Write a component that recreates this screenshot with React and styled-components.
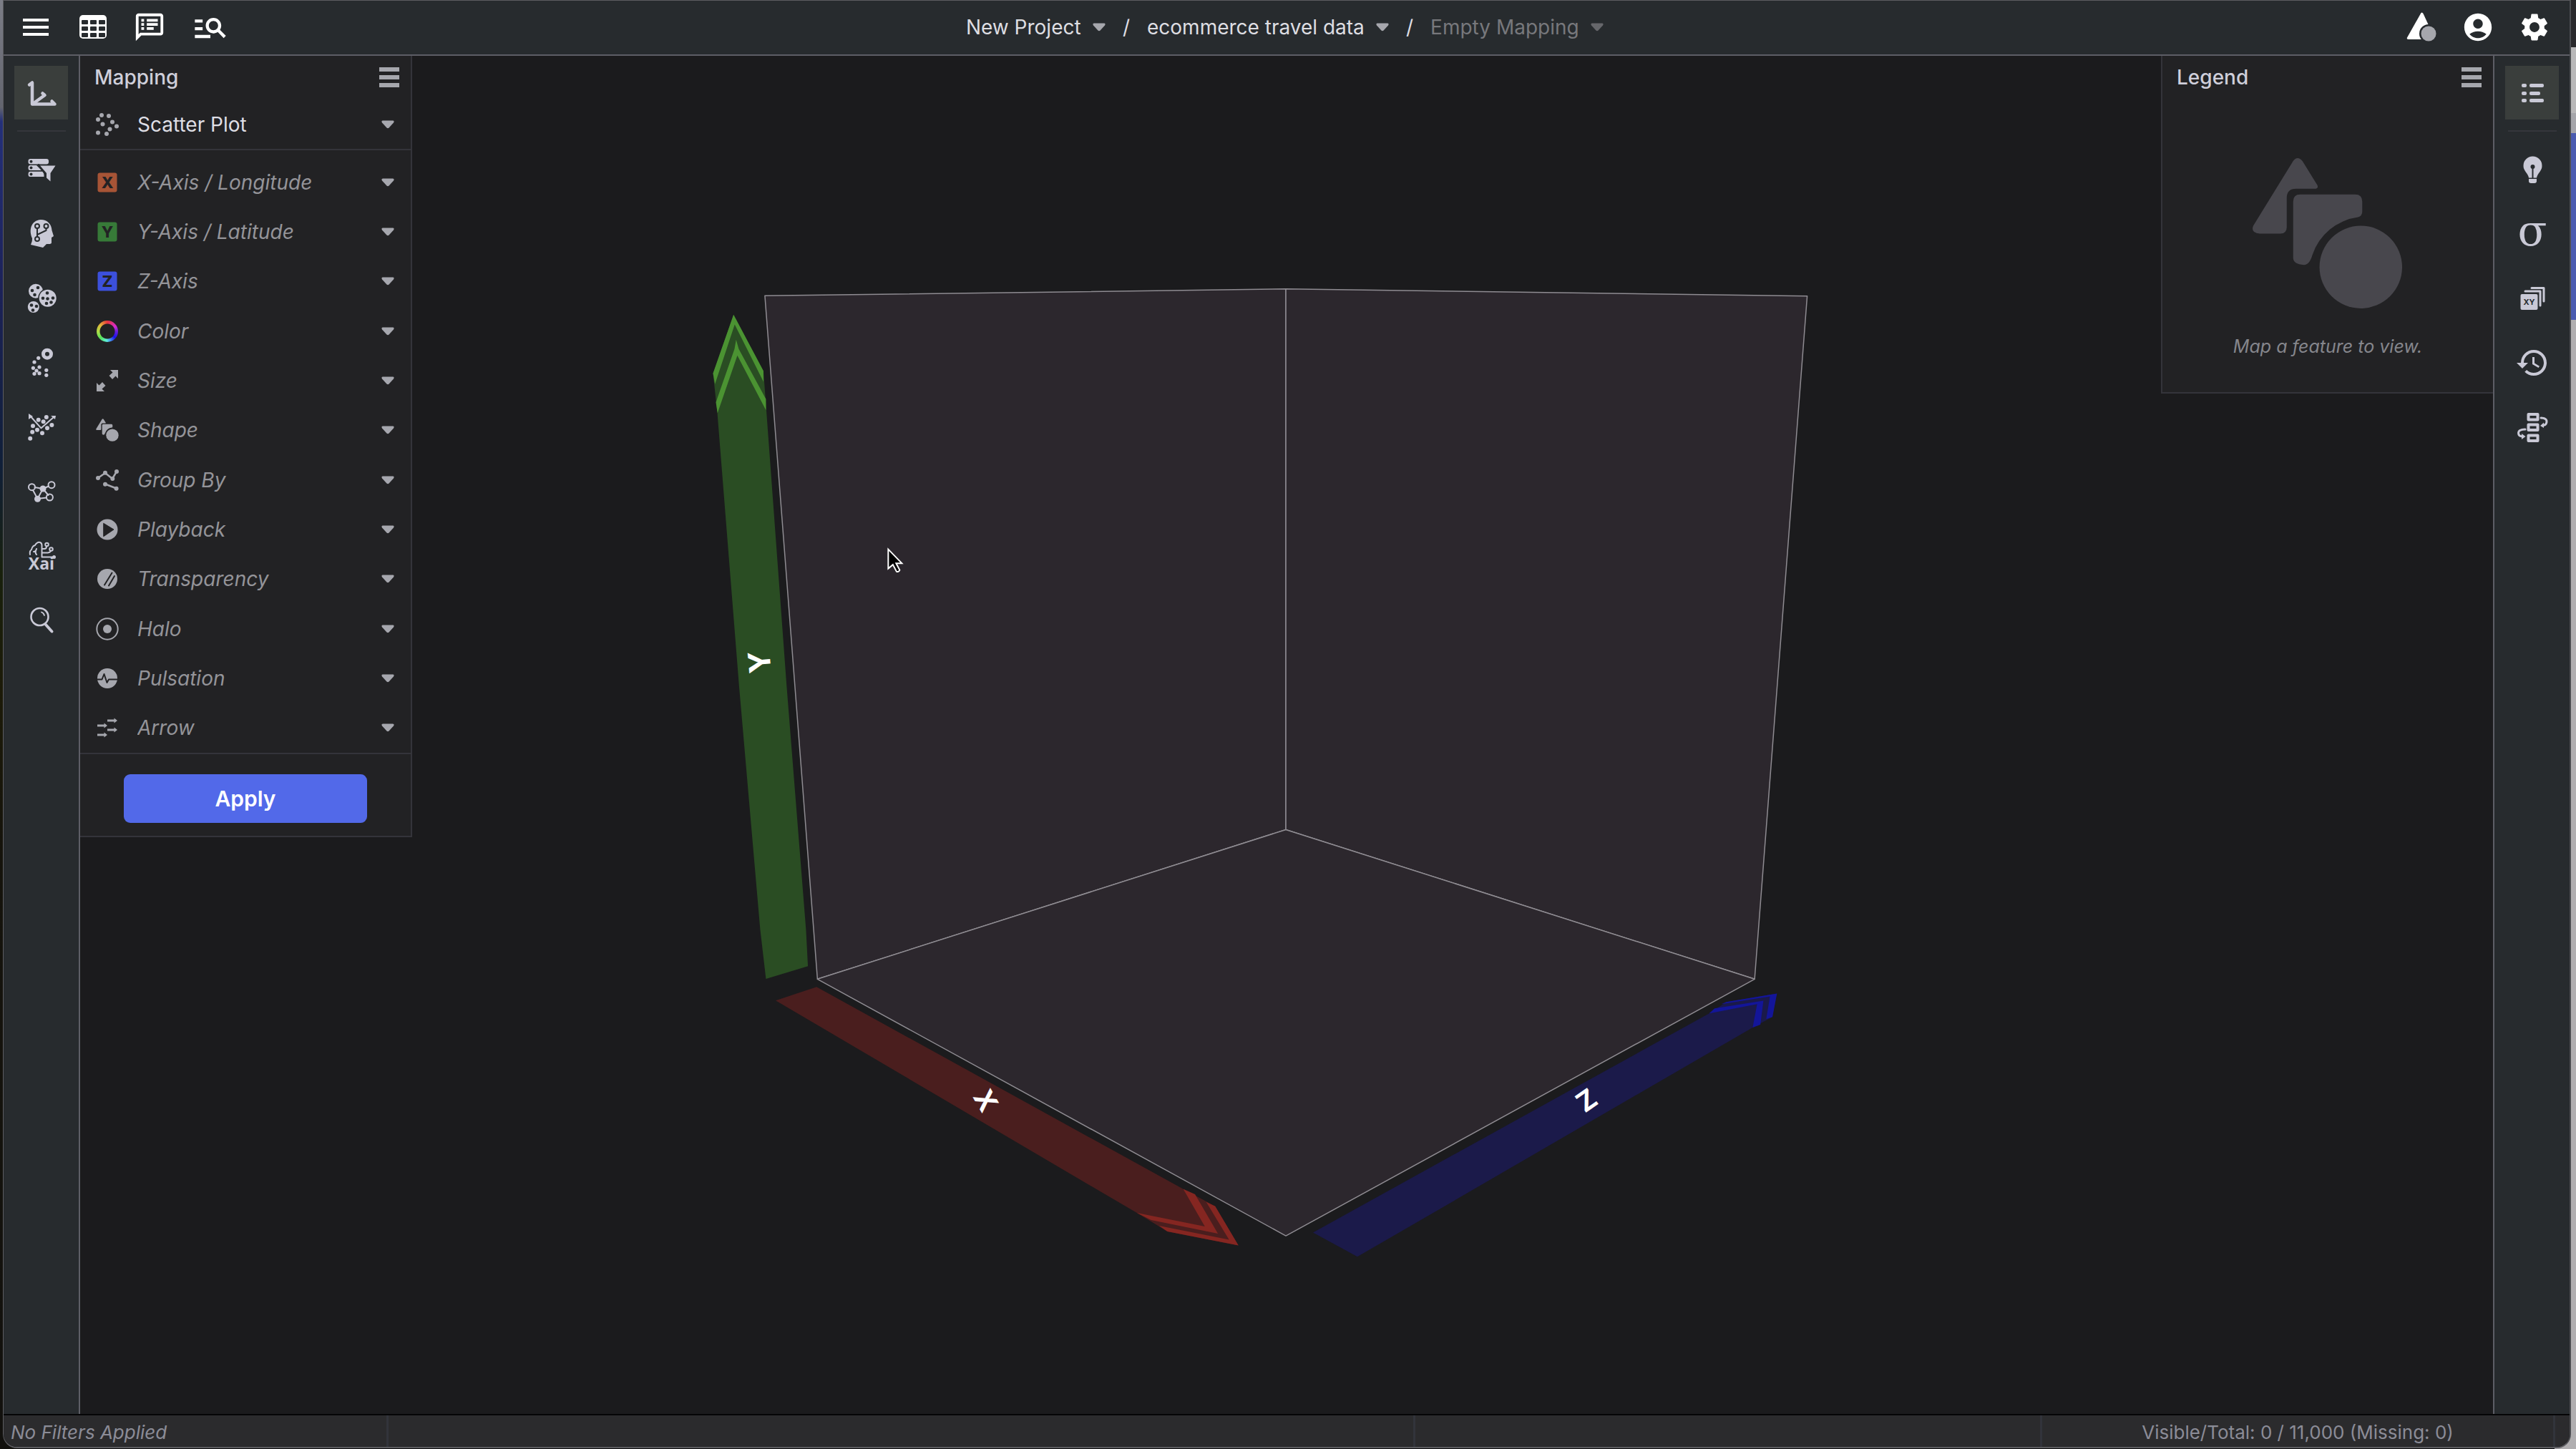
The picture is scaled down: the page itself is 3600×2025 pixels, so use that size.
import React from 'react';
import styled, { createGlobalStyle } from 'styled-components';
import {
  MdMenu,
  MdOutlineSpeakerNotes,
  MdManageSearch,
  MdAccountCircle,
  MdSettings,
  MdHistory
} from 'react-icons/md';

const GlobalStyle = createGlobalStyle`
  * {
    box-sizing: border-box;
  }

  body {
    margin: 0;
    background: #b0aeb0;
    font-family: Inter, 'Liberation Sans', sans-serif;
    font-size: 28px;
    color: #dedee4;
  }

  button, select {
    font: inherit;
    color: inherit;
    margin: 0;
    padding: 0;
    border: none;
    background: none;
  }

  svg {
    display: block;
    flex: none;
    overflow: visible;
  }
`;

const Desktop = styled.div`
  display: flex;
  min-height: 100vh;
  padding: 0 7px 1px 4px;
  background:
    linear-gradient(#7b7d86 0, #63656f 150px, #24307a 170px, #1c2258 400px, #101f38 650px, #18200c 800px, #1c1a08 970px, #15130c 1200px, #12110e 100%) left / 24px 100% no-repeat,
    linear-gradient(#29282b 0 66px, #b8b7b8 66px 158px, #a5a5aa 158px 186px, #4a5bb0 186px 447px, #b0aeb0 447px) right / 30px 100% no-repeat,
    #0c0c0d;
`;

const Window = styled.div`
  flex: 1;
  display: flex;
  flex-direction: column;
  overflow: hidden;
  background: #1b1b1d;
  border: 1px solid #5c5c60;
  border-right: 2px solid #4c4d51;
  border-bottom: 2px solid #5c5c60;
  border-radius: 0 0 20px 20px;
`;

const TopBar = styled.header`
  display: grid;
  grid-template-columns: 1fr auto 1fr;
  align-items: center;
  height: 77px;
  padding: 0 26px 2px 21px;
  background: #272b2e;
  border-bottom: 2px solid #5d5e66;
`;

const Tools = styled.div`
  display: flex;
  align-items: center;
  justify-content: ${({ $end }) => ($end ? 'flex-end' : 'flex-start')};
  gap: ${({ $end }) => ($end ? '33px' : '36px')};
`;

const IconButton = styled.button`
  display: flex;
  align-items: center;
  justify-content: center;
  color: ${({ $color }) => $color || '#fff'};
`;

const Crumbs = styled.nav`
  display: flex;
  align-items: center;
  gap: 24px;
`;

const Crumb = styled.label`
  display: flex;
  align-items: center;
  gap: 16px;
  color: ${({ $dim }) => ($dim ? '#77787c' : '#dedee2')};

  svg {
    color: ${({ $dim }) => ($dim ? '#66676b' : '#a6a7ad')};
  }
`;

const Select = styled.select`
  flex: ${({ $grow }) => ($grow ? 1 : 'none')};
  appearance: none;
  line-height: 36px;
  font-style: inherit;
`;

const Body = styled.div`
  flex: 1;
  display: flex;
`;

const Rail = styled.aside`
  display: flex;
  flex-direction: column;
  align-items: center;
  gap: 15px;
  width: 107px;
  padding-top: 14px;
  background: #272b2e;
  border: 0 solid #5d5e66;
  border-${({ $side }) => ($side === 'left' ? 'right' : 'left')}-width: 2px;
`;

const RailDivider = styled.hr`
  width: 68px;
  height: 2px;
  margin: 0;
  border: none;
  background: #35363c;
`;

const RailButton = styled(IconButton)`
  width: 75px;
  height: 75px;
  color: #c9c9d6;
  background: ${({ $active }) => ($active ? '#3a3e3c' : 'none')};
`;

/* the panels share one grid cell with the scene and sit over it */
const Stage = styled.main`
  flex: 1;
  display: grid;
  grid-template: 1fr / 1fr;
  min-width: 0;

  > * {
    grid-area: 1 / 1;
  }
`;

const Scene = styled.svg`
  width: 100%;
  height: 100%;
`;

const Panel = styled.section`
  align-self: start;
  justify-self: ${({ $side }) => $side};
  width: 464px;
  background: #222224;
  border: 0 solid #34343a;
  border-bottom-width: 2px;
  border-${({ $side }) => ($side === 'start' ? 'right' : 'left')}-width: 2px;
`;

const PanelHeader = styled.div`
  display: flex;
  align-items: center;
  justify-content: space-between;
  height: 62px;
  padding: 0 16px 2px 20px;
`;

const PanelTitle = styled.h2`
  margin: 0;
  font-size: 28px;
  font-weight: 500;
  color: #cfcfda;
`;

const Field = styled.label`
  display: flex;
  align-items: center;
  gap: 26px;
  padding: 0 23px 0 22px;
  font-style: ${({ $chosen }) => ($chosen ? 'normal' : 'italic')};
  color: ${({ $chosen }) => ($chosen ? '#dedee4' : '#949499')};

  svg {
    color: #a6a7ae;
  }
`;

const TypeRow = styled.div`
  display: grid;
  height: 70px;
  border-bottom: 2px solid #34343a;
`;

const Fields = styled.div`
  display: grid;
  grid-auto-rows: 1fr;
  min-height: 844px;
  padding: 10px 0 0;
  border-bottom: 2px solid #34343a;
`;

const PanelFooter = styled.div`
  display: flex;
  justify-content: center;
  padding: 28px 0 18px;
`;

const ApplyButton = styled.button`
  width: 340px;
  height: 68px;
  border-radius: 9px;
  background: #5269e9;
  color: #fff;
  font-size: 30px;
  font-weight: 600;
`;

const Empty = styled.div`
  display: flex;
  flex-direction: column;
  align-items: center;
  gap: 36px;
  padding: 80px 0 48px;
  color: #48474d;
`;

const EmptyText = styled.p`
  margin: 0;
  font-size: 25px;
  line-height: 32px;
  font-style: italic;
  color: #85868c;
`;

const ColorRing = styled.span`
  flex: none;
  width: 30px;
  height: 30px;
  margin: 1px;
  border-radius: 50%;
  background: radial-gradient(#222224 10px, transparent 11px),
    conic-gradient(#e8343c, #d42bd0 60deg, #6a1ee0 90deg, #1a12e8 130deg, #4aa0f0 165deg, #5ff0d8 185deg, #56e05a 225deg, #a8e048 265deg, #e0b83a 310deg, #e8343c);
`;

const StatusBar = styled.footer`
  display: grid;
  grid-template-columns: 538fr 1435fr 876fr 717fr 20fr;
  height: 46px;
  border-top: 2px solid #050506;
  background: #2b2b2d;
`;

const StatusCell = styled.div`
  display: flex;
  align-items: center;
  justify-content: ${({ $center }) => ($center ? 'center' : 'flex-start')};
  padding: 2px 0 0 ${({ $center }) => ($center ? 0 : '10px')};
  border-right: 3px solid #32343b;
  font-size: 26px;
  font-style: ${({ $center }) => ($center ? 'normal' : 'italic')};
  color: #8b8c97;

  &:last-child {
    border-right: none;
  }
`;

const Caret = () => (
  <svg width="18" height="12" viewBox="0 0 18 12" fill="currentColor">
    <path d="M2 0.5H16Q18.6 1 17 3.4L10.6 10.6Q9 12 7.4 10.6L1 3.4Q-.6 1 2 .5Z" />
  </svg>
);

const Bars = () => (
  <svg width="28" height="28" viewBox="0 0 28 28" fill="currentColor">
    <path d="M0 0H28V6H0ZM0 11H28V17H0ZM0 22H28V28H0Z" />
  </svg>
);

const Dots = ({ points, r = 3 }) => points.map(([x, y]) => <circle key={`${x}-${y}`} cx={x} cy={y} r={r} />);

const Shapes = ({ size }) => (
  <svg width={size} height={size} viewBox="0 0 211 213" fill="currentColor">
    <path d="M57 5Q63 -3 70 5L91 39Q93 44 87 44H61Q48 44 48 57V98Q48 107 39 107H10Q-3 106 1 96Z" />
    <path d="M57 62Q57 52 67 52H144Q154 52 154 62V76Q154 82 148 84A78 78 0 0 0 84 137Q80 151 72 151Q57 150 57 141Z" />
    <circle cx="152" cy="154" r="58" />
  </svg>
);

const TableIcon = () => (
  <svg width="40" height="40" viewBox="0 0 40 40">
    <rect x="1" y="3" width="38" height="33" rx="5" fill="#fff" />
    <g fill="#272b2e">
      {[4, 16, 28].map((x) => [10, 19, 28].map((y) => <rect key={`${x}${y}`} x={x} y={y} width="9" height="6" rx="1" />))}
    </g>
  </svg>
);

const LogoIcon = () => (
  <svg width="44" height="44" viewBox="0 0 44 44">
    <path d="M20.5 2Q22 0.500 23.500 3L39 36.500Q40 39 37 39H3Q0 39 1 36.500Z" fill="#fff" />
    <circle cx="31" cy="31" r="13" fill="#272b2e" />
    <circle cx="31" cy="31" r="10.500" fill="#a6a7ad" />
  </svg>
);

const RailSvg = ({ children }) => (
  <svg width="48" height="48" viewBox="0 0 48 48" fill="currentColor" strokeLinecap="round" strokeLinejoin="round">
    {children}
  </svg>
);

const railLeft = [
  {
    label: 'Filters',
    icon: (
      <RailSvg>
        <rect x="5.500" y="9" width="28.500" height="7.500" rx="3" />
        <path d="M8 18H17L24 25H8Q5.500 25 5.500 21.500T8 18ZM8 26.700H26L29 34H8Q5.500 34 5.500 30.500T8 26.700Z" />
        <path d="M20 17.500L29 29V36" fill="none" stroke="#272b2e" strokeWidth="3" />
        <path d="M22 18.500H43.500L36.500 29V40.500L31 35.500V29Z" />
        <g fill="#272b2e"><Dots points={[[9.5, 12.8], [9.5, 21.5], [9.5, 30.4]]} r={2} /></g>
      </RailSvg>
    )
  },
  {
    label: 'Models',
    icon: (
      <RailSvg>
        <path d="M23 4C32 4 38 10 38.500 19L41 27L38 29V36Q38 38 34 38H31L26 43L9 39Q11.500 34 11 30C6 19 9 5 23 4Z" />
        <g fill="none" stroke="#272b2e" strokeWidth="2">
          <circle cx="18" cy="13" r="3" />
          <circle cx="30.500" cy="13" r="3" />
          <circle cx="18" cy="31" r="3" />
          <path d="M18 16V28M30.500 16V19L18 25" />
        </g>
      </RailSvg>
    )
  },
  {
    label: 'Clusters',
    icon: (
      <RailSvg>
        <circle cx="16" cy="13.700" r="10" />
        <circle cx="12.800" cy="36" r="8" />
        <circle cx="32.700" cy="23.700" r="13.500" fill="#272b2e" />
        <circle cx="32.700" cy="23.700" r="12" />
        <g fill="#272b2e">
          <Dots
            points={[[19, 9], [11, 13], [14.5, 19], [10, 33.5], [17, 35], [12, 40.5], [32, 16.5], [26, 23.7], [32.5, 24.5], [40, 23.5], [37.5, 29.5], [31, 31]]}
            r={2.3}
          />
        </g>
      </RailSvg>
    )
  },
  {
    label: 'Anomalies',
    icon: (
      <RailSvg>
        <circle cx="32" cy="11.700" r="5.500" fill="none" stroke="currentColor" strokeWidth="5" />
        <Dots points={[[19.7, 17.3], [14, 23], [12.4, 31.3], [21, 30], [17, 35], [14, 39.3], [21, 38.7], [30.8, 34.3], [30.8, 41.3]]} r={2.6} />
      </RailSvg>
    )
  },
  {
    label: 'Components',
    icon: (
      <RailSvg>
        <path d="M8 8L23.500 25.300L41 10" fill="none" stroke="currentColor" strokeWidth="2" />
        <path d="M6 5L12 9L6 13ZM37 8L44 8L43 13Z" />
        <Dots points={[[19.7, 13.7], [30.8, 10], [26.6, 16.3], [12, 22.3], [38.4, 21], [32, 25.3], [18, 27.7], [11.2, 30.7], [25, 32.3], [8.2, 39.7]]} />
      </RailSvg>
    )
  },
  {
    label: 'Network',
    icon: (
      <RailSvg>
        <g fill="none" stroke="currentColor" strokeWidth="2">
          <path d="M14.500 18L26 20L34 16.500M12 22L18.500 34L26 20L33.500 29M18.500 34L31 32.500" />
          <circle cx="10.500" cy="17.700" r="4.500" />
          <circle cx="38" cy="14.700" r="4.500" />
          <circle cx="35.400" cy="32" r="4.500" />
        </g>
        <Dots points={[[26, 20], [18.5, 34.3]]} r={4.5} />
      </RailSvg>
    )
  },
  {
    label: 'Explain',
    icon: (
      <RailSvg>
        <g fill="none" stroke="currentColor" strokeWidth="2">
          <path d="M8 22Q7 17 10 15Q11 10 15 9Q18 4 22 5Q24.500 6 24.500 9V25.500H41M13 18Q16 18 17 14M17 22Q15 20 16 17M25 19.500H33Q36 19 37 17M25 14H28Q31 14 31 10.500" />
          <circle cx="31.500" cy="8" r="2.300" />
          <circle cx="37.500" cy="14.500" r="2.300" />
        </g>
        <circle cx="41.500" cy="25.500" r="2.500" />
        <text x="24" y="43" textAnchor="middle" fontFamily="'Open Sans', sans-serif" fontWeight="700" fontSize="23">Xai</text>
      </RailSvg>
    )
  },
  {
    label: 'Search',
    icon: (
      <RailSvg>
        <g fill="none" stroke="currentColor">
          <circle cx="21.500" cy="19" r="12" strokeWidth="2.600" />
          <path d="M24 12.500Q27 13.500 28 17" strokeWidth="1.800" />
          <path d="M30 30L38.500 39.500" strokeWidth="4" />
        </g>
      </RailSvg>
    )
  }
];

const railRight = [
  {
    label: 'Insights',
    icon: (
      <RailSvg>
        <path d="M24.500 5.500A13 13 0 0 1 37.500 19C37.500 26 31 29 30 35.500H19C18 29 11.500 26 11.500 19A13 13 0 0 1 24.500 5.500Z" />
        <path d="M19 37H30V40Q30 43 27 43H22Q19 43 19 40Z" />
        <circle cx="24.500" cy="20" r="3" fill="#272b2e" />
        <path d="M24.500 20V36" stroke="#272b2e" strokeWidth="2" />
      </RailSvg>
    )
  },
  {
    label: 'Statistics',
    icon: (
      <RailSvg>
        <text x="24" y="40" textAnchor="middle" fontFamily="'DejaVu Serif', serif" fontSize="60">σ</text>
      </RailSvg>
    )
  },
  {
    label: 'Mappings',
    icon: (
      <RailSvg>
        <rect x="7.500" y="18" width="24" height="22" rx="2" />
        <path d="M14 14H35V34M23 9.500H40V28" fill="none" stroke="currentColor" strokeWidth="3" />
        <text x="19.500" y="33" textAnchor="middle" fontFamily="Inter, sans-serif" fontWeight="700" fontSize="11" fill="#272b2e">XY</text>
      </RailSvg>
    )
  },
  { label: 'History', icon: <MdHistory size={48} /> },
  {
    label: 'Stack order',
    icon: (
      <RailSvg>
        <g fill="none" stroke="currentColor" strokeWidth="4">
          <rect x="18.500" y="6" width="13" height="7.500" />
          <rect x="18.500" y="20.500" width="13" height="7.500" />
          <rect x="18.500" y="35.500" width="13" height="7.500" />
          <path strokeWidth="3" d="M36 11Q44 11 44 16Q44 21 39 21.500M14 27Q4.500 27 4.500 32Q4.500 37 11 37" />
        </g>
        <path d="M40 17.500V25L35 22ZM9 33L14.500 37L9 41Z" />
      </RailSvg>
    )
  }
];

const AxesIcon = () => (
  <RailSvg>
    <g fill="none" stroke="currentColor" strokeWidth="4.500">
      <path d="M7 12.500L11 9.500V39.500H42.500L38.500 35.500" />
      <path d="M12 39L28.500 27L25.500 24.500" />
    </g>
  </RailSvg>
);

const LegendIcon = () => (
  <RailSvg>
    {[[11, 20], [22, 15], [32, 20]].map(([y, w]) => (
      <g key={y}>
        <rect x="9" y={y} width="7" height="5" rx="2" />
        <rect x="20" y={y} width={w} height="5" rx="2" />
      </g>
    ))}
  </RailSvg>
);

const RowSvg = ({ children }) => (
  <svg width="32" height="32" viewBox="0 0 32 32" fill="currentColor" strokeLinecap="round" strokeLinejoin="round">
    {children}
  </svg>
);

const AxisBadge = ({ letter, color }) => (
  <RowSvg>
    <rect x="2.500" y="2.500" width="27" height="27" rx="3" fill={color} />
    <text x="16" y="24" textAnchor="middle" fontFamily="Inter, sans-serif" fontWeight="800" fontStyle="normal" fontSize="22" fill="#222224">
      {letter}
    </text>
  </RowSvg>
);

const ScatterIcon = () => (
  <RowSvg>
    <Dots points={[[8, 3], [18, 4], [3, 9], [9.5, 15.5], [23, 12.5], [29, 18.5], [19.5, 22.5], [3, 27.5], [15, 29]]} />
  </RowSvg>
);

const fields = [
  { name: 'X-Axis / Longitude', icon: <AxisBadge letter="X" color="#a75436" /> },
  { name: 'Y-Axis / Latitude', icon: <AxisBadge letter="Y" color="#377a38" /> },
  { name: 'Z-Axis', icon: <AxisBadge letter="Z" color="#3c50dc" /> },
  { name: 'Color', icon: <ColorRing /> },
  {
    name: 'Size',
    icon: (
      <RowSvg>
        <path d="M20 1H31V13L27.500 9.500L23 14L18.500 9L23.500 4.500ZM12 31H1V19L4.500 22.500L9 18L13.500 23L8.500 27.500Z" />
      </RowSvg>
    )
  },
  { name: 'Shape', icon: <Shapes size={32} /> },
  {
    name: 'Group By',
    icon: (
      <RowSvg>
        <path d="M3 13L13 6L23 14L29 4M13 21.500L28.500 27.500" fill="none" stroke="currentColor" strokeWidth="2.500" />
        <Dots points={[[3, 13], [13, 5.7], [23.3, 14], [29, 4], [13, 21.7], [28.6, 27.7]]} />
      </RowSvg>
    )
  },
  {
    name: 'Playback',
    icon: (
      <RowSvg>
        <circle cx="16" cy="16" r="14.500" />
        <path d="M11 7.500L25 16L11 25.500Z" fill="#222224" stroke="#222224" />
      </RowSvg>
    )
  },
  {
    name: 'Transparency',
    icon: (
      <RowSvg>
        <circle cx="16" cy="16" r="14" />
        <path d="M22.500 7.500L12 24.500M26 12L18 25.500" stroke="#222224" strokeWidth="2" />
      </RowSvg>
    )
  },
  {
    name: 'Halo',
    icon: (
      <RowSvg>
        <circle cx="16" cy="16" r="14.700" fill="none" stroke="currentColor" strokeWidth="2" />
        <circle cx="16" cy="16" r="6" />
      </RowSvg>
    )
  },
  {
    name: 'Pulsation',
    icon: (
      <RowSvg>
        <circle cx="16" cy="16" r="14" />
        <path d="M2 17.500H8.500L11.500 10L15.500 22L18 17.500H30" fill="none" stroke="#222224" strokeWidth="2" />
      </RowSvg>
    )
  },
  {
    name: 'Arrow',
    icon: (
      <RowSvg>
        {[[16, 6], [2, 13], [16, 19], [2, 26]].map(([x, y]) => (
          <path key={y} d={`M${x} ${y - 1.5}h9.500v-2l4.500 3.500l-4.500 3.500v-2h-9.500z`} />
        ))}
      </RowSvg>
    )
  }
];

const Cube = () => (
  <Scene viewBox="112 78 3374 1899">
    <g fill="#2c272d" stroke="#8f8c92" strokeWidth="1.500" strokeLinejoin="round">
      <path d="M1069.500 413.500L1798 404V1160L1143 1369Z" />
      <path d="M2527 414L1798 404V1160L2453.500 1369Z" />
      <path d="M1143 1369L1798 1160L2453.500 1369L1798 1728Z" />
    </g>

    <path fill="#2a4d23" d="M1025.700 440L1067.500 518.600L1071.500 573L1100 960L1127 1300L1129.700 1351L1071 1368.700L1063 1300L1033.500 960L1003 577L997 522Z" />
    <g fill="#4b9332">
      <path d="M1025.700 440L1067.500 518.600V533.600L1027.300 453.600L999.700 537L997 522Z" />
      <path d="M1029.300 475L1033 488L1071 558V573.600L1031 497L1003.300 577.500L1001 562.500L1027 488Z" />
    </g>

    <path fill="#4a1e1e" d="M1141.800 1380L1654.600 1662.700L1699.200 1686.700L1731.700 1741.300L1632.300 1722L1589.700 1696L1084.600 1399Z" />
    <g fill="#852621">
      <path d="M1686.600 1680.700L1699.200 1686.700L1731.700 1741.300L1632.300 1722L1620.700 1714L1718.600 1733.300Z" />
      <path d="M1654.600 1662.700L1671 1670L1703 1725L1609.600 1706L1589.700 1696L1684.700 1715Z" />
    </g>

    <path fill="#1b1a4a" d="M1836 1723.300L2390 1417L2414 1401L2484.700 1389.300L2478.400 1422L2450.800 1436.700L1898 1757.300Z" />
    <g fill="#131599">
      <path d="M2414 1401L2484.700 1389.300L2478.400 1422L2469.700 1425L2475 1393.300L2407 1404Z" />
      <path d="M2397.500 1410L2465.800 1399.300L2461.500 1432.700L2450.800 1436.700L2457 1404L2390 1417Z" />
    </g>

    <g fill="#fff" fontFamily="Inter, sans-serif" fontWeight="700" fontSize="42" textAnchor="middle">
      <text x="1062" y="926" dy="15" transform="rotate(-95 1062 926)">Y</text>
      <text x="1378" y="1539" dy="13" fontSize="38" transform="rotate(60 1378 1539)">X</text>
      <text x="2219" y="1539" dy="13" fontSize="38" transform="rotate(-35 2219 1539)">Z</text>
    </g>

    <path
      d="M1242 768L1242 795L1248.500 789.500L1253.500 799Q1256 800.500 1258 797L1253 787.500H1261Z"
      fill="#000"
      stroke="#fff"
      strokeWidth="2"
    />
  </Scene>
);

const crumbs = ['New Project', 'ecommerce travel data', 'Empty Mapping'];

const App = () => {
  return (
    <>
      <GlobalStyle />
      <Desktop>
        <Window>
          <TopBar>
            <Tools>
              <IconButton aria-label="Menu"><MdMenu size={48} /></IconButton>
              <IconButton aria-label="Data table"><TableIcon /></IconButton>
              <IconButton aria-label="Notes"><MdOutlineSpeakerNotes size={46} /></IconButton>
              <IconButton aria-label="Query"><MdManageSearch size={52} /></IconButton>
            </Tools>
            <Crumbs>
              {crumbs.map((name, index) => (
                <React.Fragment key={name}>
                  {index > 0 && <span>/</span>}
                  <Crumb $dim={index === 2}>
                    <Select aria-label={name}>
                      <option>{name}</option>
                    </Select>
                    <Caret />
                  </Crumb>
                </React.Fragment>
              ))}
            </Crumbs>
            <Tools $end>
              <IconButton aria-label="Home"><LogoIcon /></IconButton>
              <IconButton aria-label="Account"><MdAccountCircle size={46} /></IconButton>
              <IconButton aria-label="Settings"><MdSettings size={46} /></IconButton>
            </Tools>
          </TopBar>

          <Body>
            <Rail $side="left">
              <RailButton $active aria-label="Mapping"><AxesIcon /></RailButton>
              <RailDivider />
              {railLeft.map((item) => (
                <RailButton key={item.label} aria-label={item.label}>{item.icon}</RailButton>
              ))}
            </Rail>

            <Stage>
              <Cube />
              <Panel $side="start">
                <PanelHeader>
                  <PanelTitle>Mapping</PanelTitle>
                  <IconButton $color="#a6a7ad" aria-label="Mapping menu"><Bars /></IconButton>
                </PanelHeader>
                <TypeRow>
                  <Field $chosen>
                    <ScatterIcon />
                    <Select $grow aria-label="Plot type">
                      <option>Scatter Plot</option>
                    </Select>
                    <Caret />
                  </Field>
                </TypeRow>
                <Fields>
                  {fields.map((field) => (
                    <Field key={field.name}>
                      {field.icon}
                      <Select $grow aria-label={field.name}>
                        <option>{field.name}</option>
                      </Select>
                      <Caret />
                    </Field>
                  ))}
                </Fields>
                <PanelFooter>
                  <ApplyButton>Apply</ApplyButton>
                </PanelFooter>
              </Panel>

              <Panel $side="end">
                <PanelHeader>
                  <PanelTitle>Legend</PanelTitle>
                  <IconButton $color="#a6a7ad" aria-label="Legend menu"><Bars /></IconButton>
                </PanelHeader>
                <Empty>
                  <Shapes size={212} />
                  <EmptyText>Map a feature to view.</EmptyText>
                </Empty>
              </Panel>
            </Stage>

            <Rail $side="right">
              <RailButton $active aria-label="Legend"><LegendIcon /></RailButton>
              <RailDivider />
              {railRight.map((item) => (
                <RailButton key={item.label} aria-label={item.label}>{item.icon}</RailButton>
              ))}
            </Rail>
          </Body>

          <StatusBar>
            <StatusCell>No Filters Applied</StatusCell>
            <StatusCell />
            <StatusCell />
            <StatusCell $center>Visible/Total: 0 / 11,000 (Missing: 0)</StatusCell>
            <StatusCell />
          </StatusBar>
        </Window>
      </Desktop>
    </>
  );
};

export default App;
